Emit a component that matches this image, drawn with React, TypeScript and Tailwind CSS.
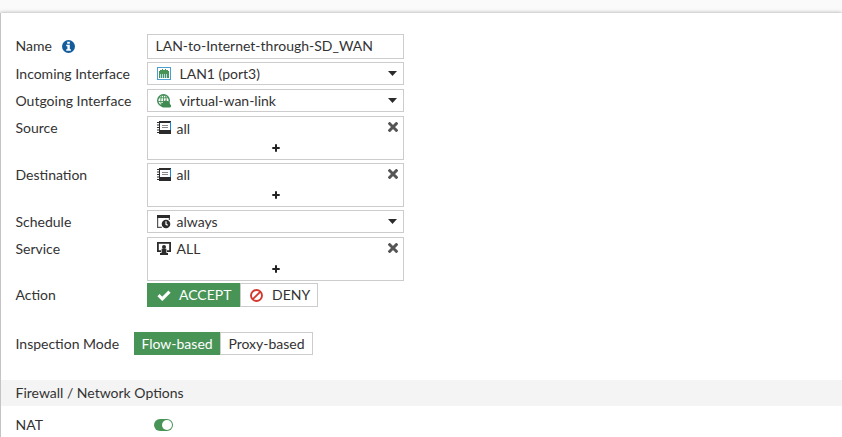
import type { ReactNode } from 'react';

const InfoIcon = () => (
  <svg className="ml-[10px] size-[13px]" viewBox="0 0 13 13">
    <circle cx="6.5" cy="6.5" r="6.5" fill="#135c9c" />
    <path d="M5.2 1.8h2.6v2H5.2zM4.2 4.7h3.6v4.5h1.1v1.6H4.2V9.2h1.2V6.3H4.2z" fill="#fff" />
  </svg>
);

const PortIcon = () => (
  <svg className="size-[14px]" viewBox="0 0 14 14">
    <rect x=".5" y=".5" width="13" height="12" fill="#fff" stroke="#4a9fd0" />
    <path d="M2 4h1V3h2V2h1v1h2V2h1v1h2v1h1v7H2z" fill="#489457" />
    <path d="M3.5 7v4M5.5 7v4M7.5 7v4M9.5 7v4" stroke="#b9dcec" />
  </svg>
);

const GlobeIcon = () => (
  <svg className="size-[14px]" viewBox="0 0 14 14" fill="none">
    <circle cx="6.5" cy="6.5" r="5.8" stroke="#3f8a58" strokeWidth="1.4" />
    <ellipse cx="6.5" cy="6.5" rx="2.7" ry="5.8" stroke="#489457" />
    <path d="M1.5 3.8h10M.8 7.5h11M6.5 .8v11" stroke="#489457" strokeWidth=".9" />
    <path d="M5.6 13.4a2.7 2.7 0 0 1 .2-4.8 2.9 2.9 0 0 1 5.2-.8 2.3 2.3 0 0 1 2 2.4 1.8 1.8 0 0 1 .2 3.2z" fill="#3f8a50" />
  </svg>
);

const AddressIcon = () => (
  <svg className="size-[14px]" viewBox="0 0 14 14">
    <path d="M2 0h12v13H2z" fill="#2b2b2b" />
    <path d="M3 2h10v7H3z" fill="#fff" />
    <path d="M5 4.5h6M5 6.5h6" stroke="#888" />
    <path d="M0 1.5h2M0 4h2M0 6.5h2M0 9h2M0 11.5h2" stroke="#2b2b2b" />
    <path d="M13.5 1v8" stroke="#1684d8" />
  </svg>
);

const ScheduleIcon = () => (
  <svg className="size-[14px]" viewBox="0 0 14 14">
    <path d="M.6 3v9.4h4.2M12.4 3v2" fill="none" stroke="#555" strokeWidth="1.2" />
    <path d="M0 0h13v3H0z" fill="#2b2b2b" />
    <circle cx="9" cy="9" r="4.3" fill="#2b2b2b" />
    <path d="M9 6.3v3l1.7 1" fill="none" stroke="#fff" strokeWidth="1.2" />
  </svg>
);

const ServiceIcon = () => (
  <svg className="size-[14px]" viewBox="0 0 14 14" fill="#2b2b2b">
    <path d="M4 9.1H.9V.9h12.2v8.2H10" fill="none" stroke="#2b2b2b" strokeWidth="1.8" />
    <circle cx="7" cy="5" r="2" />
    <path d="M4.6 6.7h4.8v4.3H11v2H3v-2h1.6z" />
  </svg>
);

const RemoveIcon = () => (
  <svg className="size-[10px]" viewBox="0 0 10 10">
    <path d="M1.7 1.7l6.6 6.6M8.3 1.7l-6.6 6.6" stroke="#555" strokeWidth="3" strokeLinecap="square" />
  </svg>
);

const PlusIcon = () => (
  <svg className="size-[8px]" viewBox="0 0 8 8">
    <path d="M4 .3v7.4M.3 4h7.4" stroke="#222" strokeWidth="2" />
  </svg>
);

const CaretIcon = () => (
  <svg className="h-[5px] w-[9px]" viewBox="0 0 9 5">
    <path d="M0 0h9L4.5 5z" fill="#2b2b2b" />
  </svg>
);

const CheckIcon = () => (
  <svg className="h-[11px] w-[14px]" viewBox="0 0 14 11">
    <path d="M1.5 5.2l3.8 3.7 7.2-7.2" fill="none" stroke="#fff" strokeWidth="3.1" />
  </svg>
);

const BanIcon = () => (
  <svg className="size-[13px]" viewBox="0 0 13 13">
    <circle cx="6.5" cy="6.5" r="5.5" fill="none" stroke="#d33a2f" strokeWidth="1.9" />
    <path d="M2.8 2.8" stroke="#d33a2f" />
    <path d="M2.8 10.2l7.4-7.4" stroke="#d33a2f" strokeWidth="1.9" />
  </svg>
);

function Row({ label, children, className }: { label: ReactNode; children: ReactNode; className: string }) {
  return (
    <div className={`flex items-start ${className}`}>
      <div className="flex h-[24px] w-[131.5px] shrink-0 items-center whitespace-nowrap">{label}</div>
      {children}
    </div>
  );
}

function Select({ icon, text, gap }: { icon: ReactNode; text: string; gap: string }) {
  return (
    <div className={`flex h-[23px] w-[257px] items-center border border-[#ccc] pr-[6px] pl-[9px] ${gap}`}>
      {icon}
      <span className="flex-1">{text}</span>
      <span className="pb-px"><CaretIcon /></span>
    </div>
  );
}

function MultiSelect({ icon, text, leading }: { icon: ReactNode; text: string; leading: string }) {
  return (
    <div className="flex h-[44px] w-[257px] flex-col border border-[#ccc]">
      <div className="flex h-[23px] items-start pr-[5px] pl-[9px]">
        <span className="pt-[4px]">{icon}</span>
        <span className={`ml-[5.5px] flex-1 ${leading}`}>{text}</span>
        <span className="pt-[5px]"><RemoveIcon /></span>
      </div>
      <div className="flex justify-center pt-[4px] pl-px"><PlusIcon /></div>
    </div>
  );
}

export default function App() {
  return (
    <div className="h-[437px] w-[842px] overflow-hidden bg-[#fafafa] pt-[13px] font-['Lato',sans-serif] text-[14px] leading-[20px] text-[#333]">
      <main className="h-[424px] border-l border-[#c4c4c4] bg-white pt-[21px] shadow-[0_0_4px_rgba(0,0,0,0.35)]">
        <div className="flex flex-col pl-[14.5px]">
          <Row className="h-[28px]" label={<>Name<InfoIcon /></>}>
            <div className="flex h-[25px] w-[257px] items-center border border-[#ccc] pb-px pl-[7.5px]">LAN-to-Internet-through-SD_WAN</div>
          </Row>
          <Row className="h-[27px]" label="Incoming Interface">
            <Select icon={<PortIcon />} text="LAN1 (port3)" gap="gap-[8.5px]" />
          </Row>
          <Row className="h-[27px]" label="Outgoing Interface">
            <Select icon={<GlobeIcon />} text="virtual-wan-link" gap="gap-[8.5px]" />
          </Row>
          <Row className="h-[47px]" label="Source">
            <MultiSelect icon={<AddressIcon />} text="all" leading="leading-[23px]" />
          </Row>
          <Row className="h-[47px]" label="Destination">
            <MultiSelect icon={<AddressIcon />} text="all" leading="leading-[21px]" />
          </Row>
          <Row className="h-[27px]" label="Schedule">
            <Select icon={<ScheduleIcon />} text="always" gap="gap-[5.5px]" />
          </Row>
          <Row className="h-[46px]" label="Service">
            <MultiSelect icon={<ServiceIcon />} text="ALL" leading="leading-[21px]" />
          </Row>
          <Row className="h-[49px]" label="Action">
            <div className="flex h-[24px]">
              <div className="flex w-[93px] items-center gap-[8px] bg-[#489457] pl-[10px] text-white"><CheckIcon />ACCEPT</div>
              <div className="flex w-[78px] items-center gap-[9px] border border-[#ccc] pl-[9px]"><BanIcon />DENY</div>
            </div>
          </Row>
          <div className="flex h-[48px] items-start">
            <div className="flex h-[24px] w-[118.5px] items-center">Inspection Mode</div>
            <div className="flex h-[23px]">
              <div className="flex w-[86px] items-center justify-center bg-[#489457] text-white">Flow-based</div>
              <div className="flex w-[93px] items-center justify-center border border-[#ccc]">Proxy-based</div>
            </div>
          </div>
        </div>
        <h2 className="flex h-[26px] items-center bg-[#f4f4f4] pl-[14.5px]">Firewall / Network Options</h2>
        <div className="flex h-[37px] items-center pl-[14.5px]">
          <span className="w-[138.5px]">NAT</span>
          <span className="flex h-[12px] w-[19px] justify-end rounded-full bg-[#489457] p-px">
            <span className="size-[10px] rounded-full bg-white" />
          </span>
        </div>
      </main>
    </div>
  );
}
